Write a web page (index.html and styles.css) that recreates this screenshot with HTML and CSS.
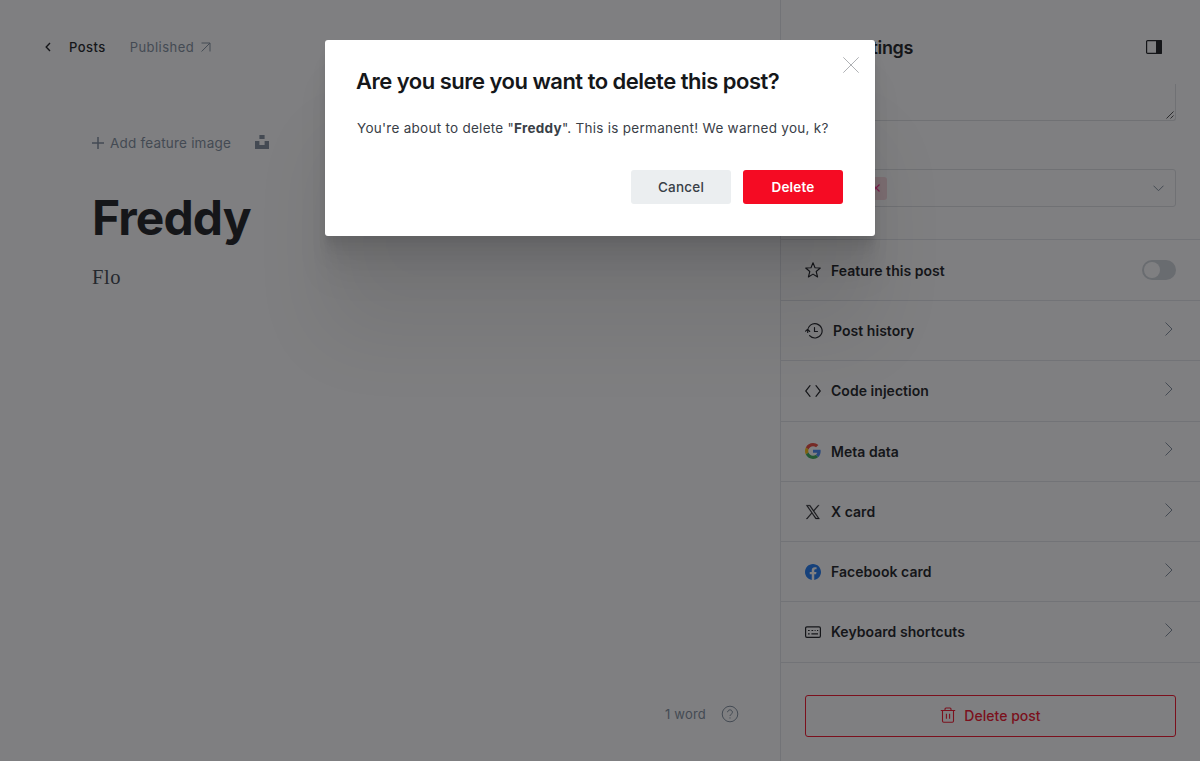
FILE: index.html
```html
<!DOCTYPE html>
<html lang="en">
<head>
<meta charset="utf-8">
<title>Freddy</title>
<link rel="stylesheet" href="styles.css">
</head>
<body>
<div class="app">
  <main class="editor">
    <header class="topbar">
      <a class="back"><svg width="6" height="10" viewBox="0 0 6 10"><path d="M5 1 1.2 5 5 9" fill="none" stroke="currentColor" stroke-width="1.4"/></svg><span>Posts</span></a>
      <a class="status"><span>Published</span><svg width="10" height="10" viewBox="0 0 10 10"><path d="M.5 1H9v8.5M9 1 .6 9.5" fill="none" stroke="currentColor"/></svg></a>
    </header>
    <div class="canvas">
      <div class="feature-image">
        <svg width="12" height="12" viewBox="0 0 12 12"><path d="M6 0v12M0 6h12" stroke="currentColor" stroke-width="1.5"/></svg>
        <span>Add feature image</span>
        <svg class="unsplash" width="14" height="14" viewBox="0 0 14 14"><path d="M4.4 0h5.2v4H4.4zM9.6 6.1H14V14H0V6.1h4.4V10h5.2z" fill="currentColor"/></svg>
      </div>
      <h1 class="post-title">Freddy</h1>
      <p class="post-body">Flo</p>
    </div>
    <footer class="wordcount">
      <span>1 word</span>
      <svg width="18" height="18" viewBox="0 0 18 18" fill="none" stroke="currentColor"><circle cx="9" cy="9" r="7.8"/><path d="M6.6 7.2a2.4 2.4 0 1 1 3.6 2.1c-.8.5-1.2.8-1.2 1.6"/><circle cx="9" cy="12.9" r=".6" fill="currentColor" stroke="none"/></svg>
    </footer>
  </main>

  <aside class="sidebar">
    <header class="sidebar-head">
      <h2>Post settings</h2>
      <svg width="16" height="14" viewBox="0 0 16 14"><rect x=".6" y=".6" width="14.8" height="12.8" rx="1" fill="none" stroke="currentColor" stroke-width="1.2"/><path d="M10 0h5a1 1 0 0 1 1 1v12a1 1 0 0 1-1 1h-5z" fill="currentColor"/></svg>
    </header>
    <div class="excerpt"><svg width="8" height="8" viewBox="0 0 8 8"><path d="M.5 7.5l7-7M4.5 7.5l3-3" stroke="#333" stroke-width=".9"/></svg></div>
    <div class="authors">
      <span class="chip"><svg width="8" height="8" viewBox="0 0 8 8"><path d="M.5.5l7 7M7.5.5l-7 7" stroke="currentColor" stroke-width="1.2"/></svg></span>
      <svg class="caret" width="11" height="7" viewBox="0 0 11 7"><path d="M.5.7l5 5 5-5" fill="none" stroke="currentColor"/></svg>
    </div>
    <ul class="menu">
      <li class="tall"><svg class="icon star" viewBox="0 0 16 16"><path d="M8 .8l2 4.9 5.3.3-4.1 3.5 1.4 5.5L8 12.1 3.4 15l1.4-5.5L.7 6l5.3-.3z" fill="none" stroke="currentColor" stroke-width="1.1" stroke-linejoin="round"/></svg><span>Feature this post</span><i class="toggle"></i></li>
      <li><svg class="icon wide" viewBox="0 0 18 16"><g fill="none" stroke="currentColor" stroke-width="1.15" stroke-linecap="round" stroke-linejoin="round"><path d="M2.7 9.5V8A7.2 7.2 0 1 1 4.6 12.7M.6 8.1l2.1-1.8 2 2.2M9.5 4.5v4h3"/></g></svg><span>Post history</span><svg class="arrow" viewBox="0 0 8 14"><path d="M.5.5L7 7 .5 13.5"/></svg></li>
      <li class="tall raised"><svg class="icon" viewBox="0 0 16 16"><path d="M5 2.7L.7 8 5 13.3M11 2.7L15.3 8 11 13.3" fill="none" stroke="currentColor" stroke-width="1.2" stroke-linecap="round"/></svg><span>Code injection</span><svg class="arrow" viewBox="0 0 8 14"><path d="M.5.5L7 7 .5 13.5"/></svg></li>
      <li><svg class="icon google" viewBox="0 0 48 48"><path fill="#ea4335" d="M24 9.5c3.54 0 6.71 1.22 9.21 3.6l6.85-6.85C35.9 2.38 30.47 0 24 0 14.62 0 6.51 5.38 2.56 13.22l7.98 6.19C12.43 13.72 17.74 9.5 24 9.5z"/><path fill="#4285f4" d="M46.98 24.55c0-1.57-.15-3.09-.38-4.55H24v9.02h12.94c-.58 2.96-2.26 5.48-4.78 7.18l7.73 6c4.51-4.18 7.09-10.36 7.09-17.65z"/><path fill="#fbbc05" d="M10.53 28.59c-.48-1.45-.76-2.99-.76-4.59s.27-3.14.76-4.59l-7.98-6.19C.92 16.46 0 20.12 0 24c0 3.88.92 7.54 2.56 10.78l7.97-6.19z"/><path fill="#34a853" d="M24 48c6.48 0 11.93-2.13 15.89-5.81l-7.73-6c-2.15 1.45-4.92 2.3-8.16 2.3-6.26 0-11.57-4.22-13.47-9.91l-7.98 6.19C6.51 42.62 14.62 48 24 48z"/></svg><span>Meta data</span><svg class="arrow high" viewBox="0 0 8 14"><path d="M.5.5L7 7 .5 13.5"/></svg></li>
      <li><svg class="icon" viewBox="-100 -100 1420 1420"><path fill="currentColor" stroke="currentColor" stroke-width="24" d="M714.163 519.284 1160.89 0h-105.86L667.137 450.887 357.328 0H0l468.492 681.821L0 1226.37h105.866l409.625-476.152 327.181 476.152H1200L714.137 519.284zM569.165 687.828l-47.468-67.894-377.686-540.24h162.604l304.797 435.991 47.468 67.894 396.2 566.721H892.476L569.165 687.854z"/></svg><span>X card</span><svg class="arrow" viewBox="0 0 8 14"><path d="M.5.5L7 7 .5 13.5"/></svg></li>
      <li><svg class="icon" viewBox="0 0 24 24"><path fill="#1877f2" d="M24 12.07C24 5.4 18.63 0 12 0S0 5.4 0 12.07C0 18.1 4.39 23.1 10.13 24v-8.44H7.08v-3.49h3.05V9.41c0-3.02 1.79-4.69 4.53-4.69 1.31 0 2.68.24 2.68.24v2.97h-1.51c-1.49 0-1.96.93-1.96 1.89v2.25h3.33l-.53 3.49h-2.8V24C19.61 23.1 24 18.1 24 12.07z"/></svg><span>Facebook card</span><svg class="arrow" viewBox="0 0 8 14"><path d="M.5.5L7 7 .5 13.5"/></svg></li>
      <li class="tall raised"><svg class="icon" viewBox="0 0 16 16"><rect x=".6" y="2.9" width="14.8" height="10.4" rx="1.3" fill="none" stroke="currentColor" stroke-width="1.2"/><path d="M3 6.5h1.7M6.5 6.5h1.7M9.6 6.5h1M12 6.5h1.2M3 9.9h1.7M6.4 9.9H13" stroke="currentColor" stroke-width="1.1"/></svg><span>Keyboard shortcuts</span><svg class="arrow" viewBox="0 0 8 14"><path d="M.5.5L7 7 .5 13.5"/></svg></li>
    </ul>
    <button class="delete-post"><svg width="16" height="16" viewBox="0 0 16 16" fill="none" stroke="currentColor" stroke-width="1.1"><path d="M.8 3.5h14.4M5 3.3V2q0-1 1-1h4q1 0 1 1v1.3M2.5 3.5V14q0 1.2 1.2 1.2h8.6q1.2 0 1.2-1.2V3.5M6.4 6.7v5M9.6 6.7v5"/></svg><span>Delete post</span></button>
  </aside>
</div>

<div class="overlay">
  <section class="modal">
    <svg class="close" width="16" height="16" viewBox="0 0 16 16"><path d="M.3.3l15.4 15.4M15.7.3L.3 15.7" stroke="#9a9da1" stroke-width=".8"/></svg>
    <h3>Are you sure you want to delete this post?</h3>
    <p>You're about to delete "<strong>Freddy</strong>". This is permanent! We warned you, k?</p>
    <div class="actions"><button class="btn cancel">Cancel</button><button class="btn danger">Delete</button></div>
  </section>
</div>
</body>
</html>
```
FILE: styles.css
```css
* { box-sizing: border-box; }
body { margin: 0; font-family: Inter, sans-serif; color: #15171a; background: #fff; }
h1, h2, h3, p, ul { margin: 0; padding: 0; }
svg { display: block; flex: none; }
button { font-family: inherit; }

.app { display: flex; width: 1200px; height: 761px; overflow: hidden; }

.editor { width: 780px; display: flex; flex-direction: column; }
.topbar { display: flex; align-items: center; gap: 24px; height: 94px; padding-left: 45px; font-size: 13px; line-height: 20px; letter-spacing: .45px; }
.back, .status { display: flex; align-items: center; }
.back { gap: 18px; font-weight: 500; }
.status { gap: 7px; color: #7c8b9a; }
.canvas { flex: 1; padding: 39px 92px 0; }
.feature-image { display: flex; align-items: center; height: 20px; color: #7c8b9a; font-size: 13.5px; line-height: 20px; letter-spacing: .2px; }
.feature-image span { margin: -1px 0 0 6px; }
.unsplash { margin: -3px 0 0 24px; }
.post-title { margin-top: 37px; font-size: 48px; line-height: 56px; font-weight: 700; letter-spacing: -.9px; }
.post-body { margin-top: 15px; font: 20.5px/32px "Liberation Serif", serif; letter-spacing: .6px; color: #394047; }
.wordcount { display: flex; align-items: center; justify-content: flex-end; gap: 15px; padding: 0 41px 38px 0; font-size: 13px; line-height: 18px; letter-spacing: .2px; color: #7c8b9a; }
.wordcount span { margin-top: -1px; }

.sidebar { width: 420px; border-left: 1px solid #e3e5e8; display: flex; flex-direction: column; }
.sidebar-head { display: flex; align-items: center; justify-content: space-between; height: 84px; padding: 0 38px 0 24px; }
.sidebar-head h2 { margin-top: 11px; font-size: 18px; line-height: 22px; font-weight: 600; letter-spacing: -.37px; }
.sidebar-head svg { margin-top: 10px; }
.excerpt { margin: 0 24px; height: 37px; border: 1px solid #dddfe2; border-top: 0; border-radius: 0 0 3px 3px; display: flex; align-items: flex-end; justify-content: flex-end; padding: 1px; }
.authors { margin: 48px 24px 32px; height: 38px; border: 1px solid #dddfe2; border-radius: 3px; display: flex; align-items: center; justify-content: space-between; padding: 0 11px 0 6px; color: #7c8b9a; }
.chip { width: 75px; height: 23px; border-radius: 3px; background: #fbdbe1; color: #fb2d8d; display: flex; align-items: center; justify-content: flex-end; padding-right: 7px; }
.menu { list-style: none; border-bottom: 1px solid #e3e5e8; }
.menu li { height: 60px; border-top: 1px solid #e3e5e8; display: flex; align-items: center; padding: 1px 24px 0; gap: 10px; font-size: 14px; font-weight: 600; line-height: 20px; letter-spacing: .04px; }
.menu li.tall { height: 61px; }
.menu li.raised { padding: 0 24px 1px; }
.menu span { flex: 1; }
.icon { width: 16px; height: 16px; }
.icon.wide { width: 18px; }
.star, .google { margin-top: -2px; }
.arrow { width: 8px; height: 14px; margin: -4px 3px 0 0; fill: none; stroke: #7c8b9a; }
.arrow.high { margin-top: -6px; }
.toggle { width: 34px; height: 20px; margin-top: -2px; border-radius: 10px; background: #ced4d9; padding: 2px; }
.toggle::before { content: ""; display: block; width: 16px; height: 16px; border-radius: 50%; background: #fff; }
.delete-post { margin: 32px 24px 0; height: 42px; border: 1px solid #f50b23; border-radius: 3px; background: transparent; color: #f50b23; display: flex; align-items: center; justify-content: center; gap: 8px; padding: 0 0 2px; font-size: 14px; font-weight: 500; letter-spacing: .02px; }

.overlay { position: absolute; inset: 0; background: rgba(22, 22, 25, .55); overflow: hidden; padding-top: 40px; }
.modal { position: relative; width: 550px; height: 196px; margin: 0 auto; padding: 27px 32px 32px; background: #fff; border-radius: 3px; box-shadow: 0 2.8px 2.2px rgba(0,0,0,.02), 0 6.7px 5.3px rgba(0,0,0,.028), 0 12.5px 10px rgba(0,0,0,.035), 0 22.3px 17.9px rgba(0,0,0,.042), 0 41.8px 33.4px rgba(0,0,0,.05), 0 100px 80px rgba(0,0,0,.07); }
.close { position: absolute; top: 17px; right: 16px; }
.modal h3 { margin-left: -1px; font-size: 22px; line-height: 29px; font-weight: 600; letter-spacing: -.51px; white-space: nowrap; }
.modal p { margin-top: 21px; font-size: 13.5px; line-height: 22px; letter-spacing: .27px; color: #394047; white-space: nowrap; }
.modal strong { font-weight: 700; }
.actions { display: flex; justify-content: flex-end; gap: 12px; margin-top: 31px; }
.btn { width: 100px; height: 34px; border: 0; border-radius: 3px; font-size: 13.5px; letter-spacing: .2px; font-weight: 500; padding: 0 0 1px; }
.cancel { background: #ebeef0; color: #394047; }
.danger { background: #f50b23; color: #fff; font-weight: 600; }
```
